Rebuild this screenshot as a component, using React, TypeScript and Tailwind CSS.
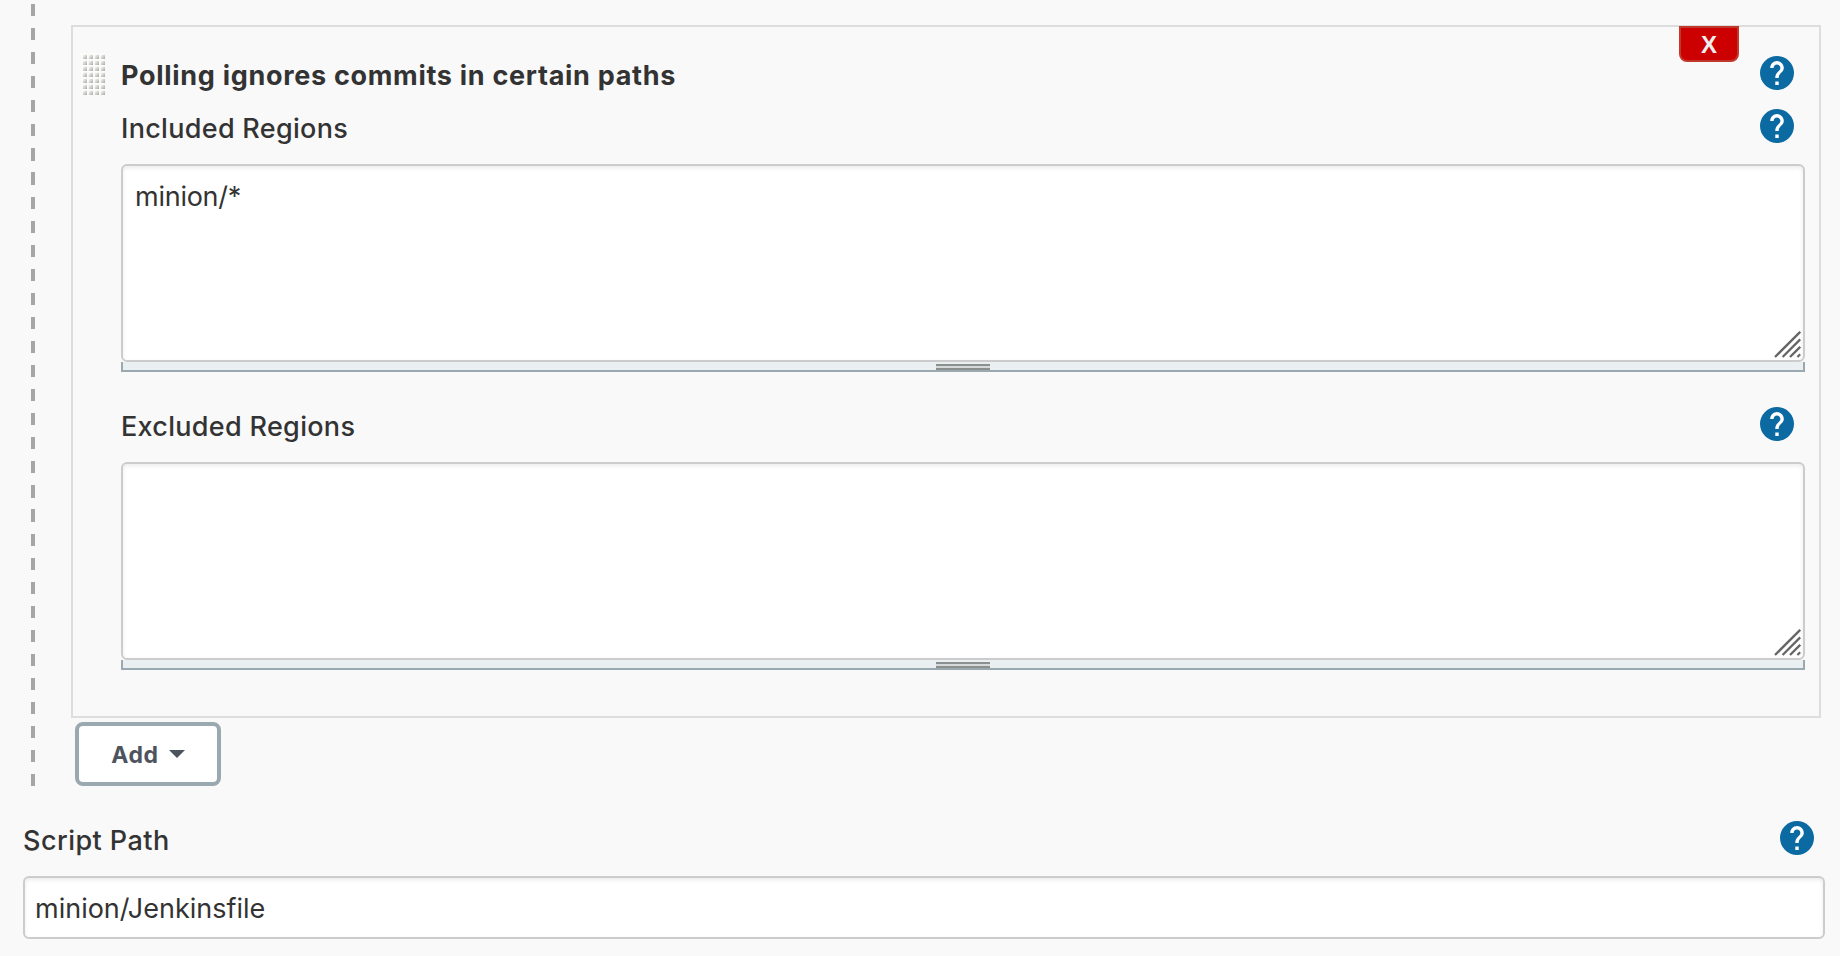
import React from "react";

function HelpIcon() {
  return (
    <svg className="size-[34px] shrink-0" viewBox="2 2 20 20" aria-hidden="true">
      <circle cx="12" cy="12" r="10" fill="#0b6aa2" />
      <path
        fill="#fff"
        d="M13 19h-2v-2h2v2zm2.07-7.75l-.9.92C13.45 12.9 13 13.5 13 15h-2v-.5c0-1.1.45-2.1 1.17-2.83l1.24-1.26c.37-.36.59-.86.59-1.41 0-1.1-.9-2-2-2s-2 .9-2 2H8c0-2.21 1.79-4 4-4s4 1.79 4 4c0 .88-.36 1.68-.93 2.25z"
      />
    </svg>
  );
}

function DragGrip() {
  const dots = [];
  for (let row = 0; row < 7; row++) {
    for (let col = 0; col < 4; col++) {
      dots.push(
        <rect key={`${row}-${col}`} x={col * 6 + 1.7} y={row * 6 + 1.7} width="4.3" height="4.3" fill="url(#dot)" />
      );
    }
  }
  return (
    <svg className="mt-[26px] h-[42px] w-6 shrink-0" viewBox="0 0 24 42" aria-hidden="true">
      <defs>
        <linearGradient id="dot" x1="0" y1="0" x2="1" y2="1">
          <stop offset="0.1" stopColor="#f4f4f2" />
          <stop offset="0.5" stopColor="#d4d4d0" />
          <stop offset="1" stopColor="#a6a6a2" />
        </linearGradient>
      </defs>
      <rect width="24" height="42" fill="#fdfdfc" />
      {dots}
    </svg>
  );
}

function Region({ label, value }: { label: string; value: string }) {
  return (
    <div className="flex flex-col">
      <div className="flex h-[34px] items-center justify-between pr-[11px]">
        <label className="pt-[6px] text-[27px] leading-[34px] font-medium tracking-[0.3px]">{label}</label>
        <HelpIcon />
      </div>
      <div className="relative mt-[21px] h-[198px] rounded-md border-2 border-[#ccc] bg-white px-3 py-[14px] text-[27px] leading-[34px] tracking-[-0.25px] shadow-[inset_0_2px_4px_rgba(0,0,0,0.08)]">
        {value}
        <svg className="absolute right-[2px] bottom-[2px] size-7" viewBox="0 0 28 28" aria-hidden="true">
          <path
            d="M2 27 27.2 1.8M9.6 27 27.2 9.4M17 27l10.2-10.2M24.4 27l2.8-2.8"
            stroke="#666"
            strokeWidth="2.3"
          />
        </svg>
      </div>
      <div className="flex h-[10px] justify-center border-x-2 border-b-2 border-[#9aa8b0] bg-[#eaeff2] pt-[2px]">
        <div className="h-[6px] w-[54px] border-y-2 border-[#8b8f8e] bg-[#d5dad8]" />
      </div>
    </div>
  );
}

export default function App() {
  return (
    <div className="flex h-[956px] w-[1840px] flex-col overflow-hidden bg-[#f9f9f9] font-['Inter',sans-serif] text-[#333]">
      <div className="flex h-[786px] pl-[31px]">
        <div className="mt-1 w-1 bg-[repeating-linear-gradient(to_bottom,#a6a6a6_0px,#a6a6a6_12.1px,transparent_12.1px,transparent_24.07px)]" />
        <div className="ml-9 flex w-[1750px] flex-col pt-[25px]">
          <section className="relative flex h-[693px] border-2 border-[#ddd] pl-2">
            <DragGrip />
            <div className="ml-4 flex w-[1684px] flex-col pt-[29px]">
              <div className="mb-[19px] flex h-[34px] items-center justify-between pr-[11px]">
                <h2 className="pt-[6px] text-[27px] leading-[34px] font-bold tracking-[0.7px]">
                  Polling ignores commits in certain paths
                </h2>
                <HelpIcon />
              </div>
              <div className="flex flex-col gap-[35px]">
                <Region label="Included Regions" value="minion/*" />
                <Region label="Excluded Regions" value="" />
              </div>
            </div>
            <button className="absolute -top-px right-20 flex h-9 w-[60px] items-center justify-center rounded-b-lg border-2 border-[#c0392b] bg-[#c00] pt-[2px] font-['Liberation_Sans',sans-serif] text-2xl font-bold text-[#eee]">
              X
            </button>
          </section>
          <button className="mt-1 ml-1 flex h-16 w-[146px] items-center justify-center gap-[10px] rounded-lg border-4 border-[#9aa8b0] bg-white text-[23px] font-bold tracking-[0.6px] text-[#4d545d]">
            <span className="pt-[2px]">Add</span>
            <svg className="h-2 w-4" viewBox="0 0 16 8" aria-hidden="true">
              <path d="M0 0h16L8 8z" fill="currentColor" />
            </svg>
          </button>
        </div>
      </div>
      <div className="mt-[35px] flex h-[34px] items-center justify-between pr-[26px] pl-[23px]">
        <label className="pt-[6px] text-[27px] leading-[34px] font-medium tracking-[0.45px]">Script Path</label>
        <HelpIcon />
      </div>
      <div className="mt-[21px] ml-[23px] flex h-[63px] w-[1802px] items-center rounded-md border-2 border-[#ccc] bg-white px-[10px] pt-[3px] text-[27px] shadow-[inset_0_2px_4px_rgba(0,0,0,0.08)]">
        minion/Jenkinsfile
      </div>
    </div>
  );
}
